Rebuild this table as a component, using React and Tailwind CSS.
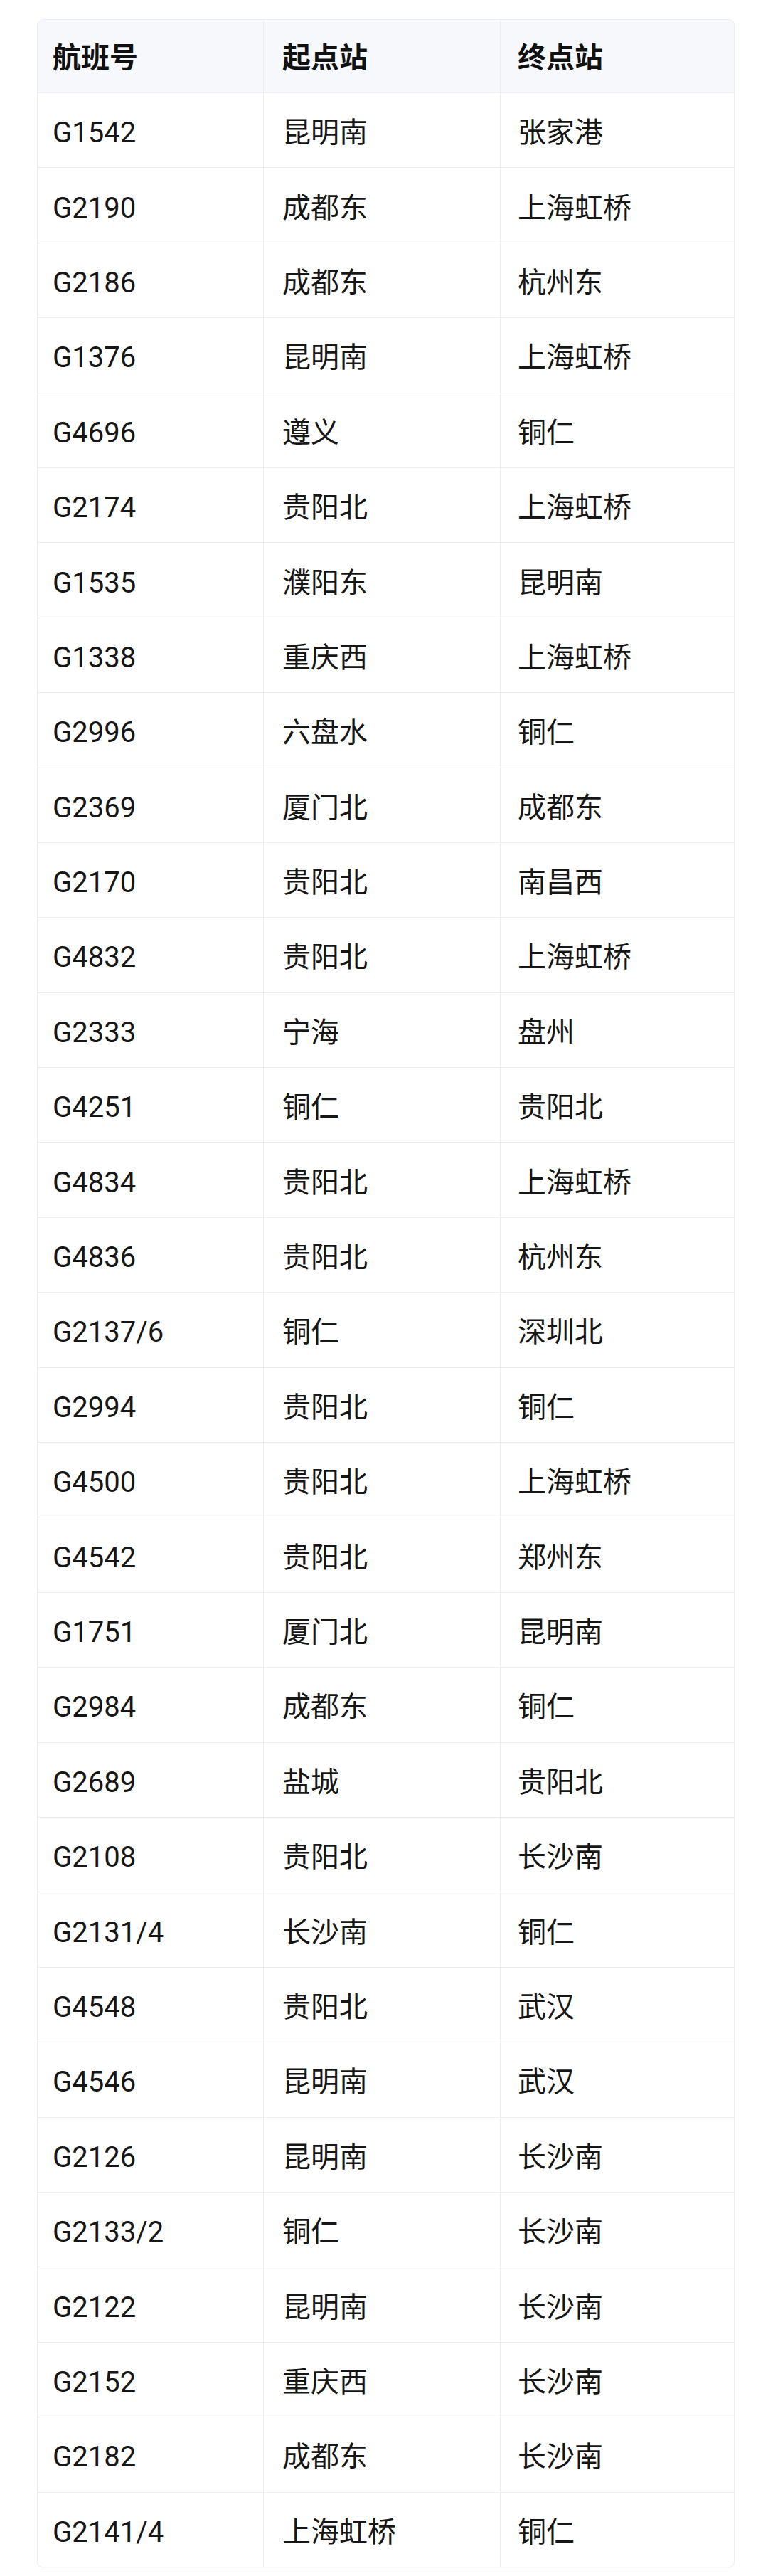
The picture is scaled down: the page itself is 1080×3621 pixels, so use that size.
// Train schedule table — three columns: number, origin, destination.

const rows = [
  ["G1542", "昆明南", "张家港"],
  ["G2190", "成都东", "上海虹桥"],
  ["G2186", "成都东", "杭州东"],
  ["G1376", "昆明南", "上海虹桥"],
  ["G4696", "遵义", "铜仁"],
  ["G2174", "贵阳北", "上海虹桥"],
  ["G1535", "濮阳东", "昆明南"],
  ["G1338", "重庆西", "上海虹桥"],
  ["G2996", "六盘水", "铜仁"],
  ["G2369", "厦门北", "成都东"],
  ["G2170", "贵阳北", "南昌西"],
  ["G4832", "贵阳北", "上海虹桥"],
  ["G2333", "宁海", "盘州"],
  ["G4251", "铜仁", "贵阳北"],
  ["G4834", "贵阳北", "上海虹桥"],
  ["G4836", "贵阳北", "杭州东"],
  ["G2137/6", "铜仁", "深圳北"],
  ["G2994", "贵阳北", "铜仁"],
  ["G4500", "贵阳北", "上海虹桥"],
  ["G4542", "贵阳北", "郑州东"],
  ["G1751", "厦门北", "昆明南"],
  ["G2984", "成都东", "铜仁"],
  ["G2689", "盐城", "贵阳北"],
  ["G2108", "贵阳北", "长沙南"],
  ["G2131/4", "长沙南", "铜仁"],
  ["G4548", "贵阳北", "武汉"],
  ["G4546", "昆明南", "武汉"],
  ["G2126", "昆明南", "长沙南"],
  ["G2133/2", "铜仁", "长沙南"],
  ["G2122", "昆明南", "长沙南"],
  ["G2152", "重庆西", "长沙南"],
  ["G2182", "成都东", "长沙南"],
  ["G2141/4", "上海虹桥", "铜仁"],
];

const cols = "grid grid-cols-[317px_333px_1fr]";

export default function App() {
  return (
    <div className="min-h-screen bg-white pt-[27px] pl-[52px] font-['Roboto','Noto_Sans_CJK_SC',sans-serif] text-[40px] leading-none text-[#161616]">
      <div className="w-[981px] overflow-hidden rounded-lg border border-[#eceef1] shadow-[0_1px_3px_rgba(0,0,0,0.03)]">
        <div className={`${cols} h-[102px] bg-[#f6f8fb] font-bold text-[#111]`}>
          <div className="flex items-center pt-[5px] pl-[21px]">航班号</div>
          <div className="flex items-center border-l border-[#eceef1] pt-[5px] pl-[26px]">起点站</div>
          <div className="flex items-center border-l border-[#eceef1] pt-[5px] pl-[24px]">终点站</div>
        </div>
        {rows.map(([no, from, to]) => (
          <div key={no} className={`${cols} h-[105.4px] border-t border-[#eceef1]`}>
            <div className="flex items-center pt-[8px] pl-[21px]">{no}</div>
            <div className="flex items-center border-l border-[#eceef1] pt-[8px] pl-[26px]">{from}</div>
            <div className="flex items-center border-l border-[#eceef1] pt-[8px] pl-[24px]">{to}</div>
          </div>
        ))}
      </div>
    </div>
  );
}
